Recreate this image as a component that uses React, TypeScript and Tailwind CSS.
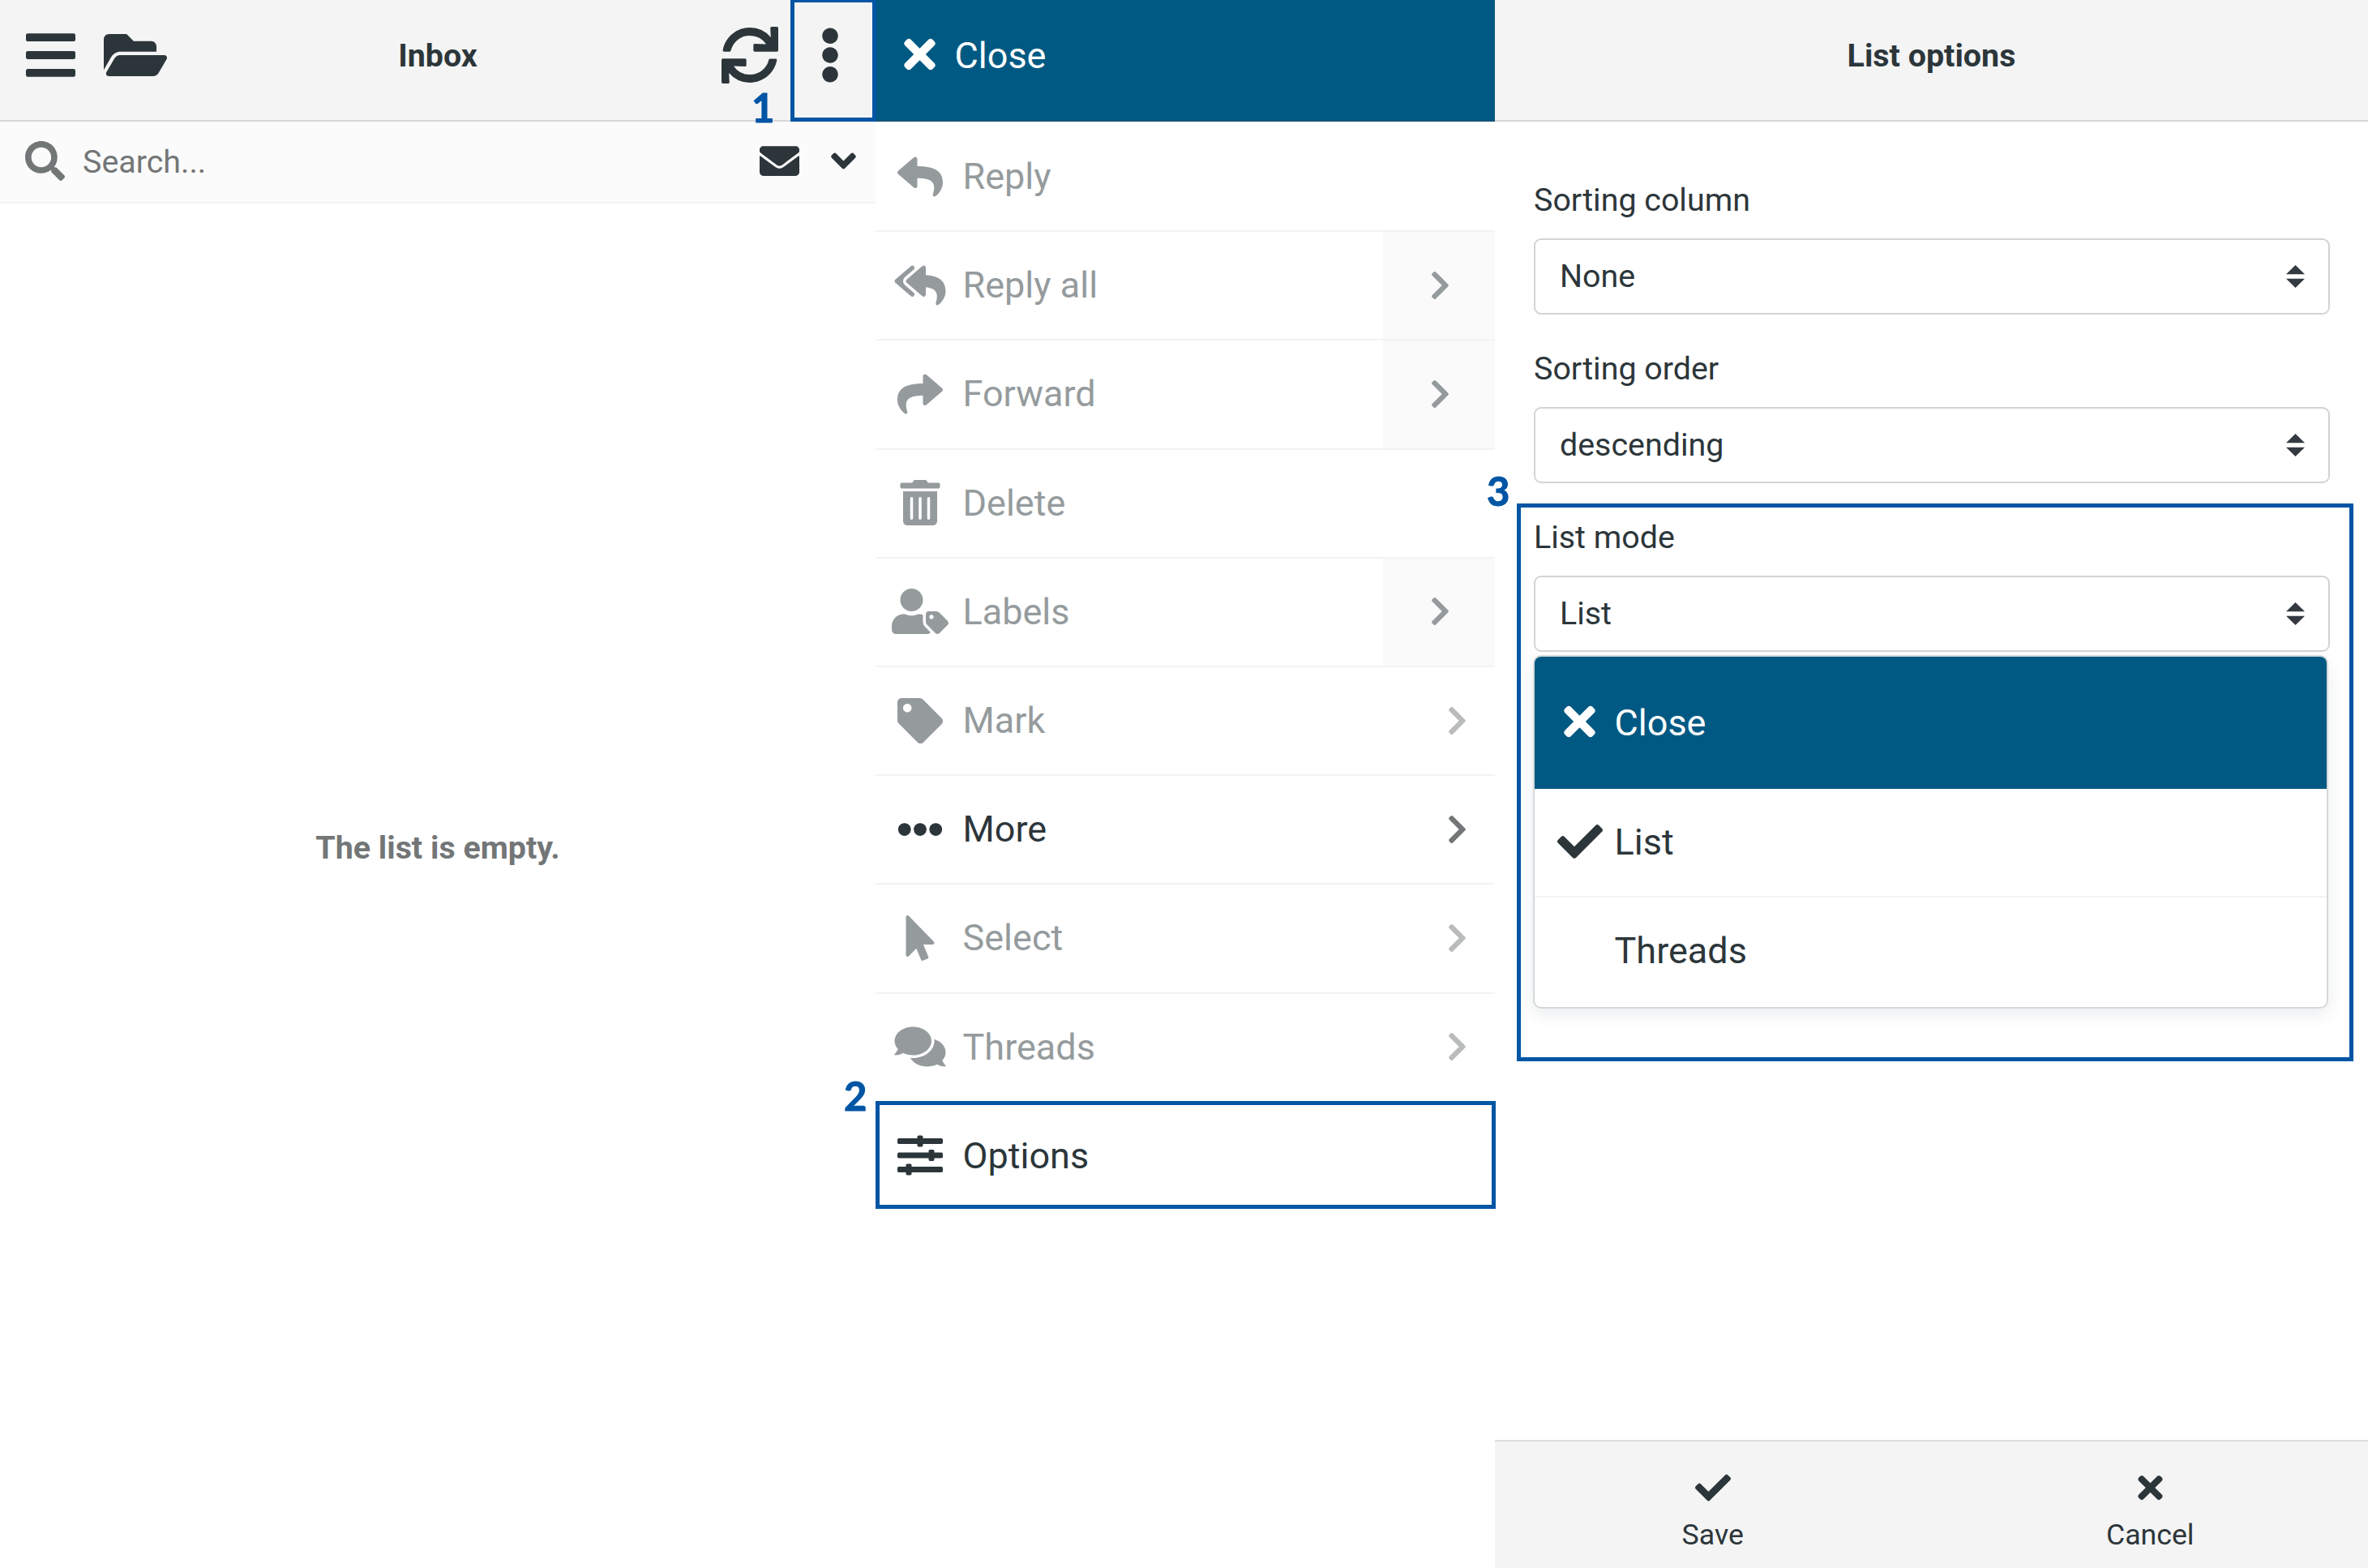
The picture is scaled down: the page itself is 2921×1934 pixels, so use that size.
import type { ReactNode } from "react";
import type { IconType } from "react-icons";
import {
  FaAngleDown,
  FaBars,
  FaCheck,
  FaChevronRight,
  FaComments,
  FaEllipsisH,
  FaEllipsisV,
  FaEnvelope,
  FaFolderOpen,
  FaMousePointer,
  FaReply,
  FaReplyAll,
  FaSearch,
  FaShare,
  FaSlidersH,
  FaSync,
  FaTag,
  FaTimes,
  FaTrashAlt,
  FaUserTag,
} from "react-icons/fa";

type MenuItem = {
  label: string;
  icon: IconType;
  active?: boolean;
  arrow?: "split" | "plain";
};

const menuItems: MenuItem[] = [
  { label: "Reply", icon: FaReply },
  { label: "Reply all", icon: FaReplyAll, arrow: "split" },
  { label: "Forward", icon: FaShare, arrow: "split" },
  { label: "Delete", icon: FaTrashAlt },
  { label: "Labels", icon: FaUserTag, arrow: "split" },
  { label: "Mark", icon: FaTag, arrow: "plain" },
  { label: "More", icon: FaEllipsisH, active: true, arrow: "plain" },
  { label: "Select", icon: FaMousePointer, arrow: "plain" },
  { label: "Threads", icon: FaComments, arrow: "plain" },
];

function Step({ n, className }: { n: number; className: string }) {
  return (
    <span
      className={`absolute z-20 font-['Lato',sans-serif] text-[49px] leading-none font-bold text-[#0055a4] [-webkit-text-stroke:1px_#0055a4] ${className}`}
    >
      {n}
    </span>
  );
}

function InboxPanel() {
  return (
    <section className="flex w-[1080px] shrink-0 flex-col">
      <header className="relative flex h-[150px] border-b-2 border-[#d4d8da] bg-[#f4f4f4]">
        <div className="flex h-[136px] w-[280px] items-center pl-8">
          <FaBars className="h-[70px] w-[61px]" />
          <FaFolderOpen className="ml-[35px] h-[70px] w-[78px]" />
        </div>
        <h1 className="flex h-[137px] flex-1 items-center justify-center text-[39.4px] font-bold">Inbox</h1>
        <div className="flex h-[136px] w-[280px] items-center">
          <FaSync className="ml-[90px] size-[70px]" />
          <FaEllipsisV className="ml-[51px] h-[70px] w-[26px]" />
        </div>
        <div className="absolute -top-0.5 left-[975px] h-[152px] w-[106px] border-[5px] border-[#0055a4]" />
        <Step n={1} className="top-[108px] left-[927px]" />
      </header>
      <div className="flex h-[101px] items-center border-b-2 border-[#f1f3f4] bg-[#fbfbfb] pr-6 pb-0.5 pl-[31px] text-[#737677]">
        <FaSearch className="size-[49px]" />
        <span className="ml-[22px] flex-1 pt-[3px] text-[39.4px]">Search...</span>
        <FaEnvelope className="size-[49px] text-[#2c363a]" />
        <FaAngleDown className="ml-[39px] h-[49px] w-[31px] text-[#2c363a]" />
      </div>
      <p className="mt-[771px] text-center text-[39.4px] leading-[48px] font-bold text-[#737677]">The list is empty.</p>
    </section>
  );
}

function MenuRow({ item }: { item: MenuItem }) {
  const Icon = item.icon;
  return (
    <li className={`flex h-[134.2px] border-b-2 border-[#f1f3f4] last:border-transparent ${item.active ? "text-[#2c363a]" : "text-[#959b9d]"}`}>
      <div className="flex flex-1 items-center pb-px pl-[19px]">
        <Icon className="h-14 w-[72px]" />
        <span className="ml-[16.5px] text-[45px]">{item.label}</span>
      </div>
      {item.arrow === "split" && (
        <div className="flex w-[138px] items-center justify-center bg-[#fafafa] pb-px pl-[3px]">
          <FaChevronRight className="h-10 w-[25px]" />
        </div>
      )}
      {item.arrow === "plain" && (
        <div className={`flex items-center pr-[34px] pb-px ${item.active ? "text-[#737677]" : "text-[#b9bbbc]"}`}>
          <FaChevronRight className="h-10 w-[25px]" />
        </div>
      )}
    </li>
  );
}

function ActionsPanel() {
  return (
    <section className="w-[764px] shrink-0">
      <header className="flex h-[150px] items-start border-b border-[#1c4d67] bg-[#005983] text-white">
        <div className="flex h-[134px] items-center pl-[35px]">
          <FaTimes className="h-14 w-[39px]" />
          <span className="ml-[23.5px] pt-[3px] text-[45px]">Close</span>
        </div>
      </header>
      <ul className="h-[1210px] pt-[2px]">
        {menuItems.map((item) => (
          <MenuRow key={item.label} item={item} />
        ))}
      </ul>
      <div className="relative -mt-0.5 flex h-[133px] w-[765px] items-center border-[5px] border-[#0055a4] pl-[22px]">
        <FaSlidersH className="size-14" />
        <span className="ml-[24.5px] pt-0.5 text-[45px]">Options</span>
        <Step n={2} className="-top-9 -left-11" />
      </div>
    </section>
  );
}

function Field({ label, value, children }: { label: string; value: string; children?: ReactNode }) {
  return (
    <div className="relative mb-9">
      <label className="block h-[78px] text-[39.4px] leading-[62px]">{label}</label>
      <div className="flex h-[94px] w-[982px] items-center justify-between rounded-[9px] border-2 border-[#d0d4d6] pr-[29px] pl-[30px] text-[39.4px]">
        <span>{value}</span>
        <svg viewBox="0 0 4 5" className="h-7 w-[23px]" preserveAspectRatio="none">
          <path fill="#343a40" d="M2 0L0 2h4zm0 5L0 3h4z" />
        </svg>
      </div>
      {children}
    </div>
  );
}

function ListModeMenu() {
  return (
    <div className="absolute top-[176px] -left-px z-10 w-[981px] overflow-hidden rounded-[10px] border-2 border-[#d5d9da] bg-white text-[45px] shadow-[0_8px_20px_rgba(30,50,80,0.09)]">
      <div className="flex h-[163px] items-center bg-[#005983] pb-[3px] pl-[36px] text-white">
        <FaTimes className="h-14 w-[39px]" />
        <span className="ml-[23.5px] pt-[3px]">Close</span>
      </div>
      <div className="flex h-[134px] items-center border-b-2 border-[#f1f3f4] pb-0.5 pl-[28px]">
        <FaCheck className="size-14" />
        <span className="ml-[14.5px]">List</span>
      </div>
      <div className="flex h-[135px] items-center pb-1 pl-[98.5px]">Threads</div>
    </div>
  );
}

function OptionsPanel() {
  return (
    <section className="relative flex flex-1 flex-col">
      <header className="flex h-[150px] border-b-2 border-[#d4d8da] bg-[#f4f4f4]">
        <h2 className="flex h-[137px] flex-1 items-center justify-center text-[39.4px] font-bold">List options</h2>
      </header>
      <div className="flex-1 pt-[66px] pl-12">
        <Field label="Sorting column" value="None" />
        <Field label="Sorting order" value="descending" />
        <Field label="List mode" value="List">
          <ListModeMenu />
        </Field>
      </div>
      <div className="absolute top-[621px] left-[27px] h-[688px] w-[1032px] border-[5px] border-[#0055a4]" />
      <Step n={3} className="top-[581px] -left-[10px]" />
      <footer className="flex h-[158px] border-t-2 border-[#dadcdd] bg-[#f4f4f4] text-[35.7px]">
        <div className="flex flex-1 flex-col items-center pt-[35px]">
          <FaCheck className="size-[44px]" />
          <span className="mt-4 leading-10">Save</span>
        </div>
        <div className="flex flex-1 flex-col items-center pt-[35px] pl-0.5">
          <FaTimes className="h-[44px] w-[31px]" />
          <span className="mt-4 leading-10">Cancel</span>
        </div>
      </footer>
    </section>
  );
}

export default function App() {
  return (
    <main className="flex h-[1934px] w-[2921px] overflow-hidden bg-white font-['Roboto',sans-serif] leading-none text-[#2c363a]">
      <InboxPanel />
      <ActionsPanel />
      <OptionsPanel />
    </main>
  );
}
